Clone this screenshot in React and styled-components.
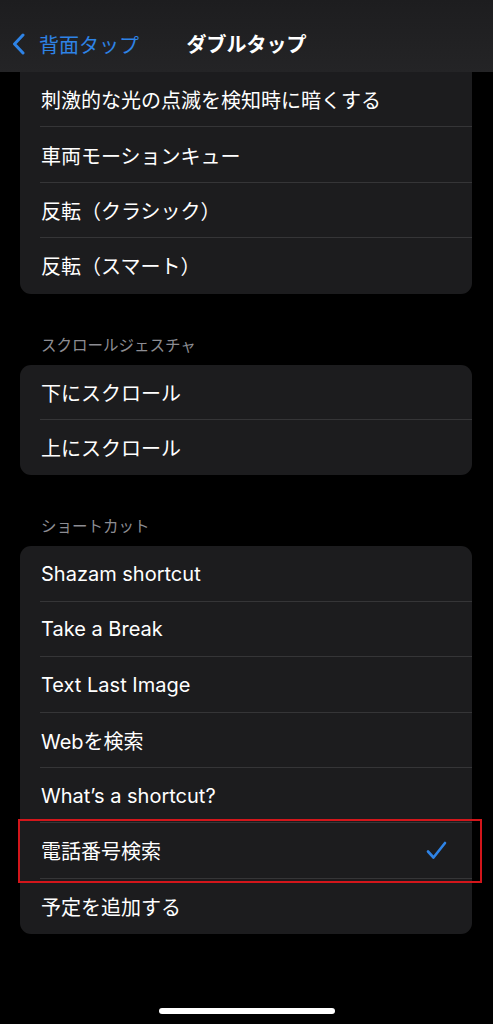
import React from "react";
import styled, { createGlobalStyle } from "styled-components";

const GlobalStyle = createGlobalStyle`
  html, body {
    margin: 0;
    padding: 0;
    background: #000;
  }
  body {
    font-family: "Inter", "Noto Sans CJK JP", sans-serif;
    -webkit-font-smoothing: antialiased;
  }
`;

const Screen = styled.div`
  background: #000;
  height: 1024px;
  overflow: hidden;
  position: relative;
  width: 493px;
`;

const NavBar = styled.div`
  align-items: center;
  background: linear-gradient(180deg, #1d1d1f 0%, #242426 100%);
  box-sizing: border-box;
  display: grid;
  grid-template-columns: 1fr auto 1fr;
  height: 72px;
  padding-top: 14px;
`;

const BackButton = styled.div`
  align-items: center;
  color: #2e83e6;
  display: flex;
  font-size: 20px;
  gap: 14px;
  padding-left: 12px;
  padding-top: 2px;
`;

const Title = styled.div`
  color: #fff;
  font-size: 20px;
  font-weight: 600;
`;

const Content = styled.div`
  display: flex;
  flex-direction: column;
`;

const Card = styled.div`
  background: #1c1c1e;
  border-radius: ${(p) => (p.$flatTop ? "0 0 11px 11px" : "11px")};
  margin: 0 21px 0 20px;
  position: relative;
`;

const Row = styled.div`
  align-items: center;
  box-sizing: border-box;
  color: #fff;
  display: flex;
  font-size: 20px;
  height: 55.4px;
  justify-content: space-between;
  padding: 0 25px 0 21px;
  position: relative;
  &:not(:last-child)::after {
    background: #353537;
    bottom: 0;
    content: "";
    height: 1px;
    left: 20px;
    position: absolute;
    right: 0;
  }
`;

const SectionHeader = styled.div`
  align-items: flex-end;
  box-sizing: border-box;
  color: #8d8d93;
  display: flex;
  font-size: 15.5px;
  height: 71px;
  line-height: 20px;
  padding: 0 0 9px 41px;
`;

const Highlight = styled.div`
  border: 2px solid #d3161b;
  bottom: -4px;
  left: -2px;
  pointer-events: none;
  position: absolute;
  right: -10px;
  top: -4px;
`;

const HomeIndicator = styled.div`
  background: #fff;
  border-radius: 4px;
  bottom: 10px;
  height: 6px;
  left: 159px;
  position: absolute;
  width: 176px;
`;

const Chevron = () => (
  <svg width="13" height="22" viewBox="0 0 13 22">
    <polyline
      points="11,2 2.5,11 11,20"
      fill="none"
      stroke="#2e83e6"
      strokeWidth="3"
      strokeLinecap="round"
      strokeLinejoin="round"
    />
  </svg>
);

const Check = () => (
  <svg width="21" height="19" viewBox="0 0 21 19">
    <polyline
      points="2,10.5 7.5,16.5 19,2"
      fill="none"
      stroke="#2e83e6"
      strokeWidth="2.6"
      strokeLinecap="round"
      strokeLinejoin="round"
    />
  </svg>
);

const flashItems = [
  "刺激的な光の点滅を検知時に暗くする",
  "車両モーションキュー",
  "反転（クラシック）",
  "反転（スマート）",
];

const scrollItems = ["下にスクロール", "上にスクロール"];

const shortcutItems = [
  { label: "Shazam shortcut" },
  { label: "Take a Break" },
  { label: "Text Last Image" },
  { label: "Webを検索" },
  { label: "What’s a shortcut?" },
  { label: "電話番号検索", checked: true },
  { label: "予定を追加する" },
];

const App = () => (
  <Screen>
    <GlobalStyle />
    <NavBar>
      <BackButton>
        <Chevron />
        <span>背面タップ</span>
      </BackButton>
      <Title>ダブルタップ</Title>
      <div />
    </NavBar>
    <Content>
      <Card $flatTop>
        {flashItems.map((t) => (
          <Row key={t}>{t}</Row>
        ))}
      </Card>

      <SectionHeader>スクロールジェスチャ</SectionHeader>
      <Card>
        {scrollItems.map((t) => (
          <Row key={t}>{t}</Row>
        ))}
      </Card>

      <SectionHeader>ショートカット</SectionHeader>
      <Card>
        {shortcutItems.map((item) => (
          <Row key={item.label}>
            <span>{item.label}</span>
            {item.checked && <Check />}
            {item.checked && <Highlight />}
          </Row>
        ))}
      </Card>
    </Content>
    <HomeIndicator />
  </Screen>
);

export default App;
